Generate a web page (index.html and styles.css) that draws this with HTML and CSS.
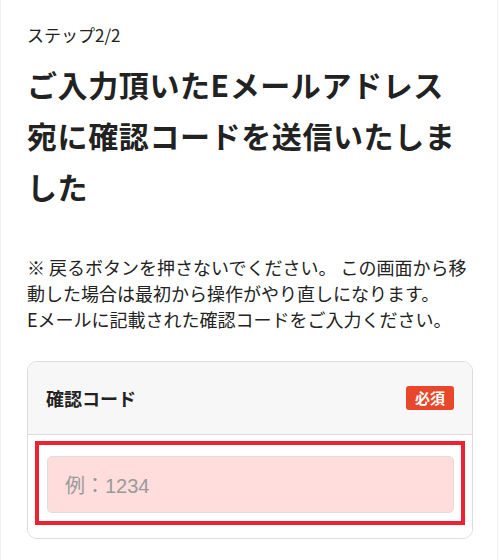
FILE: index.html
```html
<!DOCTYPE html>
<html lang="ja">
<head>
<meta charset="utf-8">
<link rel="stylesheet" href="styles.css">
</head>
<body>
<div class="page">
  <p class="step">ステップ2/2</p>
  <h1 class="title">ご入力頂いたEメールアドレス宛に確認コードを送信いたしました</h1>
  <p class="note">※ 戻るボタンを押さないでください。 この画面から移動した場合は最初から操作がやり直しになります。<br>Eメールに記載された確認コードをご入力ください。</p>
  <div class="card">
    <div class="card-head">
      <span class="label">確認コード</span>
      <span class="badge">必須</span>
    </div>
    <div class="card-body">
      <div class="highlight">
        <div class="input"><span class="placeholder">例：1234</span></div>
      </div>
    </div>
  </div>
</div>
</body>
</html>
```
FILE: styles.css
```css
html, body {
  margin: 0;
  padding: 0;
  background: #fff;
}
body {
  font-family: "Noto Sans CJK JP", "Noto Sans", sans-serif;
  color: #222;
}
.page {
  width: 498px;
  height: 560px;
  box-sizing: border-box;
  border-left: 1px solid #f0f0f0;
  border-right: 1px solid #f0f0f0;
  padding: 0 24px 0 26px;
  overflow: hidden;
}
.step {
  margin: 0;
  padding-top: 24px;
  font-size: 17px;
  line-height: 22px;
  color: #222;
}
.title {
  margin: 13px 0 0;
  font-size: 30px;
  font-weight: 700;
  line-height: 51px;
  letter-spacing: 0.6px;
  color: #222;
}
.note {
  margin: 42px 0 0;
  font-size: 18px;
  line-height: 26px;
  color: #222;
}
.card {
  margin-top: 29px;
  border: 1px solid #dcdcdc;
  border-radius: 10px;
  overflow: hidden;
}
.card-head {
  background: #f7f7f7;
  height: 72px;
  border-bottom: 1px solid #dcdcdc;
  display: flex;
  align-items: center;
  justify-content: space-between;
  padding: 0 18px 0 18px;
}
.label {
  font-size: 18px;
  font-weight: 700;
  color: #222;
}
.badge {
  background: #e9472b;
  color: #fff;
  font-size: 15px;
  font-weight: 700;
  line-height: 24px;
  height: 24px;
  padding: 0 9px;
  border-radius: 3px;
}
.card-body {
  padding: 6px 7px 13px 7px;
  background: #fff;
}
.highlight {
  border: 4px solid #ec2333;
  padding: 11px 7px 8px 8px;
}
.input {
  height: 55px;
  background: #ffdddd;
  border: 1px solid #dddddd;
  border-radius: 5px;
  display: flex;
  align-items: center;
  padding-left: 17px;
}
.placeholder {
  font-family: "Liberation Sans", "Noto Sans CJK JP", sans-serif;
  font-size: 20px;
  color: #9a9a9a;
}
```
